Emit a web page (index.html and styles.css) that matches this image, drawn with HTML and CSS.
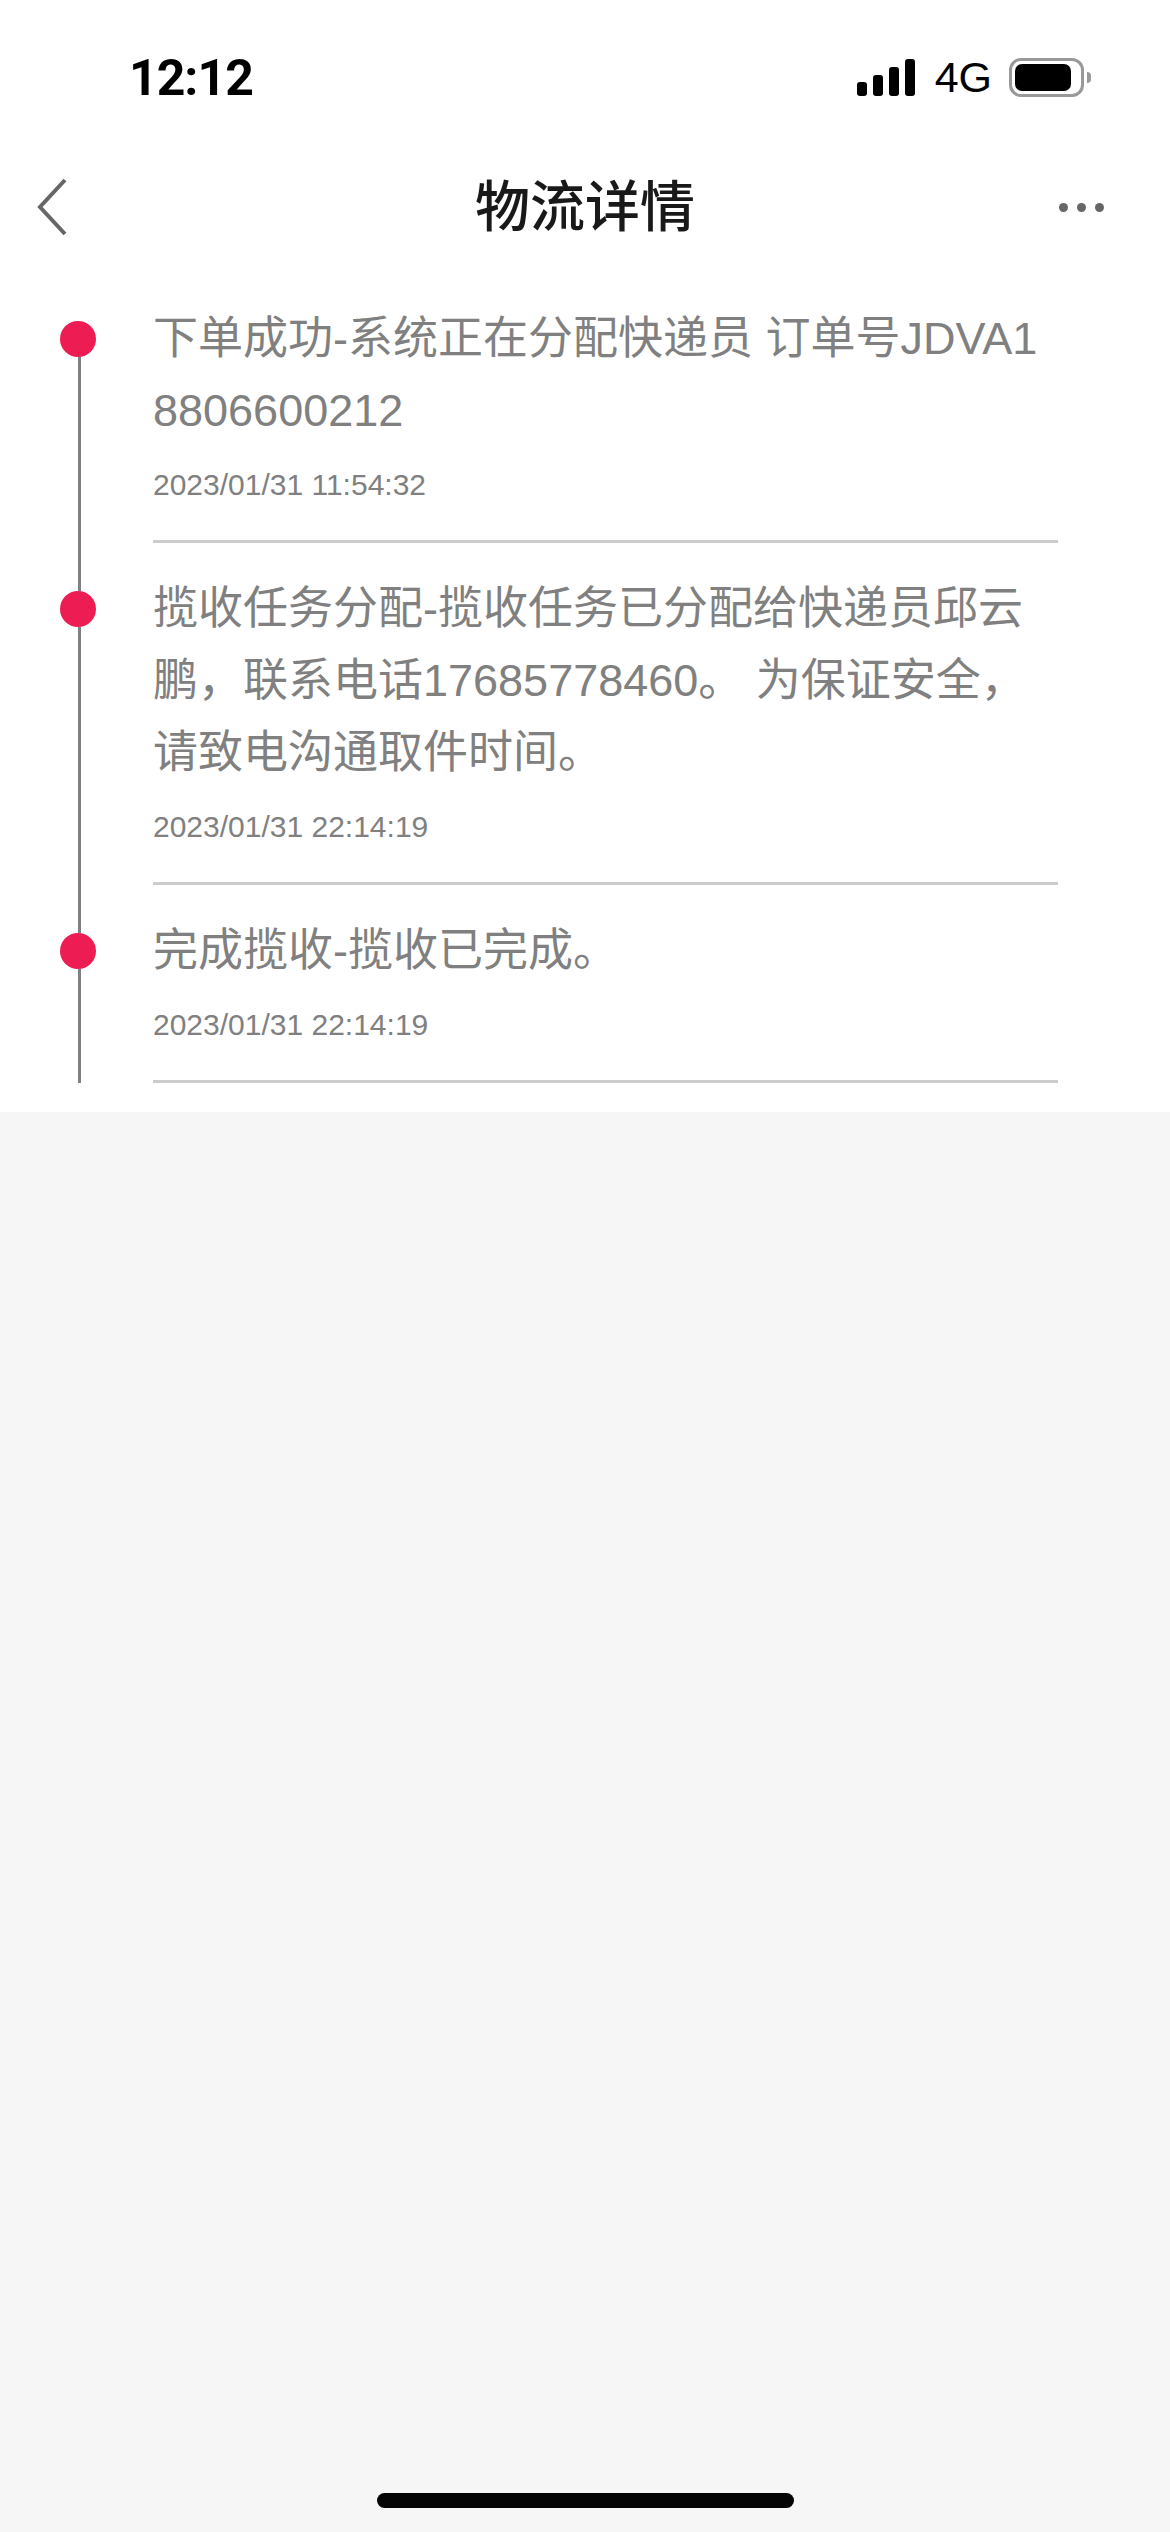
FILE: index.html
```html
<!doctype html>
<html lang="zh-CN">
  <head>
    <meta charset="utf-8" />
    <title>物流详情</title>
    <meta name="viewport" content="width=device-width, initial-scale=1" />
    <link rel="stylesheet" href="styles.css">
  </head>
  <body>
    <div id="wrapper">
      <section class="sheet">
        <div class="status-bar">
          <span class="clock">12:12</span>
          <div class="status-icons">
            <div class="signal">
              <i class="bar-1"></i>
              <i class="bar-2"></i>
              <i class="bar-3"></i>
              <i class="bar-4"></i>
            </div>
            <span class="network">4G</span>
            <div class="battery">
              <div class="battery-level"></div>
            </div>
            <div class="battery-nub"></div>
          </div>
        </div>
        <header class="nav">
          <div class="nav-side">
            <svg class="back" width="32" height="64" viewBox="0 0 32 64">
              <path d="M29 5 L4 32 L29 59" fill="none" stroke="#666" stroke-width="4" />
            </svg>
          </div>
          <h1>物流详情</h1>
          <div class="nav-side nav-side-right">
            <div class="more"><i></i><i></i><i></i></div>
          </div>
        </header>
        <ul class="timeline">
          <li class="step">
            <div class="rail"><span class="dot"></span></div>
            <div class="step-body">
              <p class="step-text">下单成功-系统正在分配快递员 订单号JDVA18806600212</p>
              <p class="step-time">2023/01/31 11:54:32</p>
            </div>
          </li>
          <li class="step">
            <div class="rail"><span class="dot"></span></div>
            <div class="step-body">
              <p class="step-text">揽收任务分配-揽收任务已分配给快递员邱云鹏，联系电话17685778460。 为保证安全，请致电沟通取件时间。</p>
              <p class="step-time">2023/01/31 22:14:19</p>
            </div>
          </li>
          <li class="step">
            <div class="rail"><span class="dot"></span></div>
            <div class="step-body">
              <p class="step-text">完成揽收-揽收已完成。</p>
              <p class="step-time">2023/01/31 22:14:19</p>
            </div>
          </li>
        </ul>
      </section>
      <div class="home-area">
        <div class="home-bar"></div>
      </div>
    </div>
  </body>
</html>
```

FILE: styles.css
```css
* {
  box-sizing: border-box;
  margin: 0;
  padding: 0;
  font-family: "Liberation Sans", "Noto Sans CJK SC", sans-serif;
}

body {
  background: #f6f6f6;
}

#wrapper {
  display: flex;
  flex-direction: column;
  height: 2532px;
}

.sheet {
  height: 1112px;
  background: #fff;
}

/* status bar */
.status-bar {
  display: flex;
  justify-content: space-between;
  align-items: center;
  height: 156px;
  padding: 0 79px 0 129px;
}

.clock {
  font-family: Roboto, sans-serif;
  font-size: 50px;
  font-weight: 700;
  letter-spacing: -1px;
  color: #000;
}

.status-icons {
  display: flex;
  align-items: center;
  margin-top: -2px;
}

.signal {
  display: flex;
  align-items: flex-end;
  gap: 6px;
  height: 37px;
}

.signal i {
  display: block;
  width: 10px;
  border-radius: 3px;
  background: #000;
}

.bar-1 { height: 14px; }
.bar-2 { height: 21px; }
.bar-3 { height: 29px; }
.bar-4 { height: 37px; }

.network {
  margin-left: 20px;
  font-size: 43px;
  color: #000;
}

.battery {
  margin-left: 17px;
  width: 75px;
  height: 39px;
  padding: 3px;
  border: 3px solid #999;
  border-radius: 12px;
}

.battery-level {
  width: 56px;
  height: 27px;
  border-radius: 7px;
  background: #000;
}

.battery-nub {
  width: 4px;
  height: 11px;
  margin-left: 3px;
  border-radius: 0 6px 6px 0;
  background: #999;
}

/* nav */
.nav {
  display: flex;
  justify-content: space-between;
  align-items: center;
  height: 102px;
  padding: 0 66px;
}

.nav-side {
  flex: 1;
  display: flex;
}

.nav-side-right {
  justify-content: flex-end;
}

.back {
  display: block;
  margin-left: -30px;
}

.nav h1 {
  margin-top: -10px;
  font-size: 55px;
  font-weight: 500;
  color: #191919;
}

.more {
  display: flex;
  gap: 9px;
}

.more i {
  width: 9px;
  height: 9px;
  border-radius: 50%;
  background: #666;
}

/* timeline */
.timeline {
  list-style: none;
  margin-top: 15px;
  padding-right: 112px;
}

.step {
  display: flex;
}

.rail {
  display: flex;
  flex-direction: column;
  align-items: center;
  flex: none;
  width: 96px;
  margin-left: 30px;
  margin-right: 27px;
}

.rail::before,
.rail::after {
  content: "";
  width: 3px;
  margin-left: 3px;
  background: #808080;
}

.rail::before {
  height: 48px;
}

.rail::after {
  flex: 1;
}

.step:first-child .rail::before {
  background: transparent;
}

.dot {
  flex: none;
  width: 36px;
  height: 36px;
  border-radius: 50%;
  background: #ed1c52;
}

.step-body {
  flex: 1;
  padding-top: 30px;
  border-bottom: 3px solid #ccc;
}

.step-text {
  padding-right: 20px;
  font-size: 45px;
  line-height: 72px;
  color: #808080;
  word-break: break-all;
}

.step-time {
  margin-top: 19px;
  padding-bottom: 36px;
  font-size: 30px;
  line-height: 38px;
  color: #808080;
}

/* home indicator */
.home-area {
  flex: 1;
  display: flex;
  justify-content: center;
  align-items: flex-end;
  padding-bottom: 24px;
}

.home-bar {
  width: 417px;
  height: 15px;
  border-radius: 8px;
  background: #050505;
}
```
